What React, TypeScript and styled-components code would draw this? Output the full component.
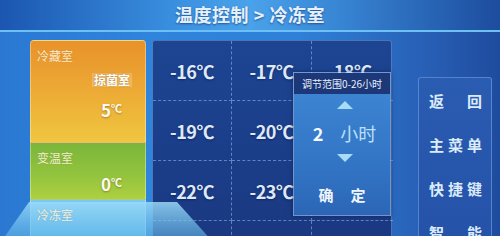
import { createGlobalStyle } from "styled-components";
import styled from "styled-components";

const GlobalStyle = createGlobalStyle`
  html, body {
    margin: 0;
    padding: 0;
    background: #1f5fb8;
  }
  * {
    box-sizing: border-box;
  }
`;

const FONT = `"Noto Sans CJK SC", "Noto Sans", sans-serif`;

const temps = [
	["-16", "-17", "18"],
	["-19", "-20", "-21"],
	["-22", "-23", "-24"],
	["", "", ""],
];

const menu = [
	["返", "回"],
	["主", "菜", "单"],
	["快", "捷", "键"],
	["智", "能"],
];

const App = () => {
	return (
		<>
			<GlobalStyle />
			<Screen>
				<Header>
					<Title>温度控制 &gt; 冷冻室</Title>
				</Header>
				<Body>
					<Compartments>
						<Card $kind="fridge">
							<CardLabel>冷藏室</CardLabel>
							<CardRight>
								<Tag>掠菌室</Tag>
								<Temp $gap={14}>
									5<Unit>℃</Unit>
								</Temp>
							</CardRight>
						</Card>
						<Card $kind="variable">
							<CardLabel>变温室</CardLabel>
							<CardRight>
								<Temp $gap={0}>
									0<Unit>℃</Unit>
								</Temp>
							</CardRight>
						</Card>
						<Card $kind="freezer">
							<Glow viewBox="0 0 220 40" preserveAspectRatio="none">
								<defs>
									<linearGradient id="glow" x1="0" y1="0" x2="0" y2="1">
										<stop offset="0" stopColor="#9adaf8" stopOpacity="0.85" />
										<stop offset="1" stopColor="#5ab2e6" stopOpacity="0.55" />
									</linearGradient>
								</defs>
								<polygon points="28,0 176,0 212,40 0,40" fill="url(#glow)" />
							</Glow>
							<CardLabel>冷冻室</CardLabel>
							<CardRight>
								<Temp $gap={4}>
									-18<Unit>℃</Unit>
								</Temp>
							</CardRight>
						</Card>
					</Compartments>

					<GridPanel>
						{temps.map((row, r) =>
							row.map((t, c) => (
								<Cell key={`${r}-${c}`} $lastCol={c === 2}>
									{t && <CellTemp>{t}℃</CellTemp>}
								</Cell>
							)),
						)}
						<Popup>
							<PopupHead>调节范围0-26小时</PopupHead>
							<PopupBody>
								<Arrow $dir="up" />
								<ValueRow>
									<Value>2</Value>
									<ValueUnit>小时</ValueUnit>
								</ValueRow>
								<Arrow $dir="down" />
								<Confirm>
									<span>确</span>
									<span>定</span>
								</Confirm>
							</PopupBody>
						</Popup>
					</GridPanel>

					<SidePanel>
						{menu.map((item, i) => (
							<MenuItem key={i}>
								{item.map((ch) => (
									<span key={ch}>{ch}</span>
								))}
							</MenuItem>
						))}
					</SidePanel>
				</Body>
			</Screen>
		</>
	);
};

const Screen = styled.div`
  width: 500px;
  height: 236px;
  overflow: hidden;
  font-family: ${FONT};
  background: linear-gradient(90deg, #2a78d2 0%, #2f84dc 30%, #2e80d8 60%, #2860b6 85%, #1e4b9e 100%);
`;

const Header = styled.div`
  height: 32px;
  display: flex;
  align-items: center;
  justify-content: center;
  background: linear-gradient(90deg, #1b56b0 0%, #3a90e0 35%, #4aa2ea 50%, #3a8ad8 65%, #1d4c9e 100%);
  border-bottom: 2px solid #6cc0f2;
`;

const Title = styled.div`
  font-size: 18px;
  font-weight: 700;
  color: #e6f0fb;
  letter-spacing: 0.5px;
  text-shadow: 0 1px 2px rgba(10, 40, 100, 0.6);
  margin-top: -2px;
`;

const Body = styled.div`
  display: flex;
  align-items: flex-start;
  padding-left: 30px;
  padding-top: 8px;
`;

const Compartments = styled.div`
  position: relative;
  z-index: 2;
  width: 116px;
  display: flex;
  flex-direction: column;
`;

const cardBg = {
	fridge: "linear-gradient(180deg, #e8922a 0%, #eca834 45%, #f0c640 100%)",
	variable: "linear-gradient(180deg, #7ab63a 0%, #94c43e 60%, #aed040 100%)",
	freezer: "linear-gradient(180deg, #7ccaf2 0%, #5ab4e8 100%)",
};

const cardHeight = { fridge: 103, variable: 57, freezer: 60 };

const Card = styled.div<{ $kind: "fridge" | "variable" | "freezer" }>`
  position: relative;
  height: ${(p) => cardHeight[p.$kind]}px;
  background: ${(p) => cardBg[p.$kind]};
  border-radius: ${(p) => (p.$kind === "fridge" ? "4px 4px 0 0" : "0")};
  border: 1px solid rgba(255, 255, 255, 0.35);
  border-top-width: ${(p) => (p.$kind === "fridge" ? "1px" : "0")};
  padding: 7px 13px 0 6px;
  display: flex;
  flex-direction: column;
`;

const Glow = styled.svg`
  position: absolute;
  left: -30px;
  top: 2px;
  width: 220px;
  height: 40px;
  z-index: 0;
`;

const CardLabel = styled.div`
  position: relative;
  z-index: 1;
  font-size: 12px;
  line-height: 16px;
  color: #fff6e0;
  opacity: 0.9;
  text-shadow: 0 0 1px rgba(120, 70, 0, 0.3);
`;

const CardRight = styled.div`
  position: relative;
  z-index: 1;
  display: flex;
  flex-direction: column;
  align-items: flex-end;
  margin-top: 9px;
`;

const Tag = styled.div`
  font-size: 12px;
  line-height: 14px;
  font-weight: 700;
  color: #ffffff;
  padding: 0 2px;
  background: rgba(255, 255, 255, 0.22);
  text-shadow: 0 0 2px rgba(120, 70, 0, 0.6);
`;

const Temp = styled.div<{ $gap: number }>`
  margin-top: ${(p) => p.$gap}px;
  padding-right: 10px;
  font-size: 17px;
  font-weight: 700;
  color: #fffaf0;
  line-height: 1;
  text-shadow: 0 1px 2px rgba(90, 60, 0, 0.45);
`;

const Unit = styled.span`
  font-size: 11px;
  vertical-align: 4px;
`;

const GridPanel = styled.div`
  position: relative;
  margin-left: 6px;
  width: 240px;
  height: 210px;
  display: grid;
  grid-template-columns: 79px 80px 81px;
  grid-template-rows: 60px 60px 60px 30px;
  background: linear-gradient(180deg, #1d4592 0%, #1b3d88 60%, #1a3880 100%);
  border: 1px solid rgba(140, 190, 240, 0.45);
  border-radius: 3px;
`;

const Cell = styled.div<{ $lastCol: boolean }>`
  display: flex;
  align-items: center;
  justify-content: center;
  border-bottom: 1px dashed rgba(150, 190, 240, 0.55);
  border-right: ${(p) => (p.$lastCol ? "none" : "1px dashed rgba(150, 190, 240, 0.55)")};
`;

const CellTemp = styled.div`
  font-size: 18px;
  font-weight: 700;
  color: #dfe9f8;
  letter-spacing: -0.5px;
  text-shadow: 0 1px 2px rgba(0, 20, 60, 0.5);
`;

const Popup = styled.div`
  position: absolute;
  left: 140px;
  top: 31px;
  width: 98px;
  height: 144px;
  display: flex;
  flex-direction: column;
  border: 1px solid rgba(170, 210, 250, 0.6);
  box-shadow: 0 0 4px rgba(0, 20, 60, 0.5);
`;

const PopupHead = styled.div`
  height: 21px;
  background: #1c3878;
  color: #e8f0fc;
  font-size: 10px;
  display: flex;
  align-items: center;
  justify-content: center;
  white-space: nowrap;
`;

const PopupBody = styled.div`
  flex: 1;
  display: flex;
  flex-direction: column;
  align-items: center;
  padding-top: 7px;
  background: linear-gradient(180deg, #3c84d2 0%, #3274c4 60%, #2c66b6 100%);
`;

const Arrow = styled.div<{ $dir: "up" | "down" }>`
  width: 0;
  height: 0;
  border-left: 8px solid transparent;
  border-right: 8px solid transparent;
  ${(p) =>
		p.$dir === "up"
			? "border-bottom: 8px solid #a8dcf6;"
			: "border-top: 8px solid #a8dcf6;"}
  margin-left: 6px;
`;

const ValueRow = styled.div`
  display: flex;
  align-items: center;
  gap: 17px;
  margin: 15px 0 12px 0;
  padding-left: 5px;
  line-height: 18px;
`;

const Value = styled.span`
  font-size: 18px;
  font-weight: 700;
  color: #f4f8ff;
`;

const ValueUnit = styled.span`
  font-size: 18px;
  color: #bde0f8;
`;

const Confirm = styled.div`
  margin-top: 25px;
  display: flex;
  gap: 17px;
  font-size: 15px;
  line-height: 16px;
  font-weight: 700;
  color: #eef4fc;
`;

const SidePanel = styled.div`
  margin-left: 26px;
  margin-top: 37px;
  width: 74px;
  height: 170px;
  padding: 14px 9px 0 10px;
  display: flex;
  flex-direction: column;
  gap: 26px;
  background: linear-gradient(180deg, #2a5cb2 0%, #2452a8 100%);
  border: 1px solid rgba(130, 180, 235, 0.5);
  border-radius: 3px;
`;

const MenuItem = styled.div`
  display: flex;
  justify-content: space-between;
  font-size: 15px;
  font-weight: 700;
  color: #dcebfa;
  line-height: 18px;
`;

export default App;
